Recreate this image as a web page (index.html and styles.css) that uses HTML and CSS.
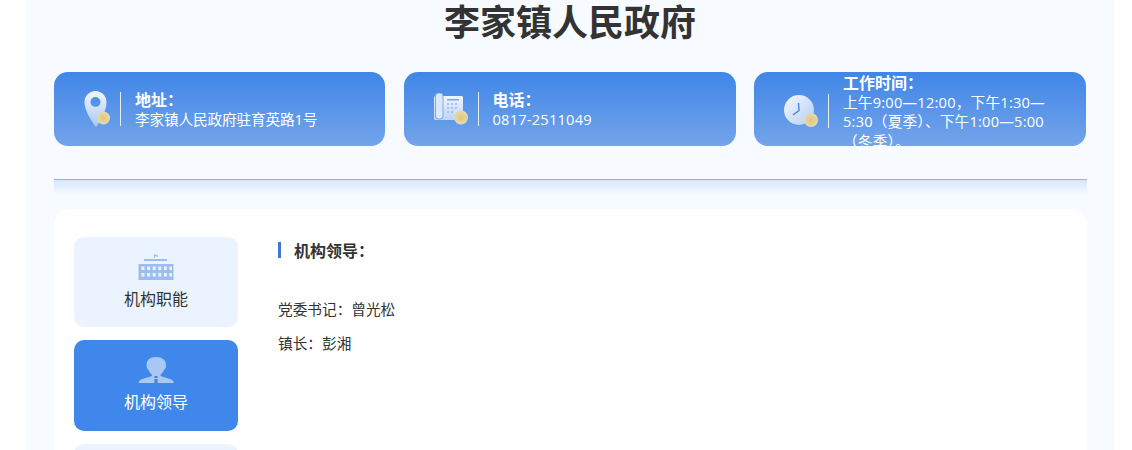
FILE: index.html
```html
<!DOCTYPE html>
<html lang="zh-CN">
<head>
<meta charset="utf-8">
<title>李家镇人民政府</title>
<link rel="stylesheet" href="styles.css">
</head>
<body>
<main class="page">
  <h1 class="title">李家镇人民政府</h1>
  <section class="cards">
    <div class="card">
      <svg class="icon" width="26" height="36" viewBox="0 0 26 36">
        <defs>
          <linearGradient id="pin" x1="0" y1="0" x2="0" y2="1"><stop offset="0" stop-color="#f2f7ff"/><stop offset="1" stop-color="#a9c6f2"/></linearGradient>
          <radialGradient id="gold"><stop offset="0" stop-color="#e6c47a"/><stop offset="1" stop-color="#e0dcb0"/></radialGradient>
        </defs>
        <path fill="url(#pin)" fill-rule="evenodd" d="M11.500 0C5.200 0 .5 5 .5 11c0 8 6 18 11.500 25 3-4 6-9 8-14 1.500-3.500 2.500-7 2.500-11C22.500 5 17.800 0 11.500 0zm0 6a5 5 0 1 1 0 10 5 5 0 0 1 0-10z"/>
        <circle cx="19.500" cy="27" r="6.500" fill="url(#gold)"/>
      </svg>
      <span class="rule"></span>
      <div class="info">
        <strong class="info-head">地址：</strong>
        <p class="info-text info-tight">李家镇人民政府驻育英路1号</p>
      </div>
    </div>
    <div class="card">
      <svg class="icon" width="34" height="32" viewBox="0 0 34 32">
        <defs>
          <linearGradient id="ph" x1="0" y1="0" x2="0" y2="1"><stop offset="0" stop-color="#f0f5ff"/><stop offset="1" stop-color="#bcd4f8"/></linearGradient>
          <radialGradient id="gold2"><stop offset="0" stop-color="#e6c47a"/><stop offset="1" stop-color="#e0dcb0"/></radialGradient>
        </defs>
        <rect x="0" y="3" width="29" height="24" rx="1.500" fill="url(#ph)"/>
        <rect x="1.500" y="0" width="7.500" height="26" rx="3" fill="#dce8fb" stroke="#7fa6e4"/>
        <rect x="13" y="6" width="12" height="1.500" fill="#7fa6e4"/>
        <path d="M13 10h2v2h-2zM17 10h2v2h-2zM21 10h2v2h-2zM13 14h2v2h-2zM17 14h2v2h-2zM21 14h2v2h-2zM13 18h2v2h-2zM17 18h2v2h-2z" fill="#a8c4ee"/>
        <circle cx="27" cy="24.500" r="7" fill="url(#gold2)"/>
      </svg>
      <span class="rule"></span>
      <div class="info">
        <strong class="info-head">电话：</strong>
        <p class="info-text info-wide">0817-2511049</p>
      </div>
    </div>
    <div class="card card-long">
      <svg class="icon" width="34" height="32" viewBox="0 0 34 32">
        <defs>
          <linearGradient id="cl" x1="0" y1="0" x2="1" y2="1"><stop offset="0" stop-color="#f4f8ff"/><stop offset="1" stop-color="#b4cef5"/></linearGradient>
          <radialGradient id="gold3"><stop offset="0" stop-color="#e6c47a"/><stop offset="1" stop-color="#e0dcb0"/></radialGradient>
        </defs>
        <circle cx="15" cy="15" r="15" fill="url(#cl)"/>
        <path d="M14.500 8l.5 7.500L9 20" fill="none" stroke="#4f82d8" stroke-width="1.400"/>
        <circle cx="27" cy="25" r="7" fill="url(#gold3)"/>
      </svg>
      <span class="rule"></span>
      <div class="info">
        <strong class="info-head">工作时间：</strong>
        <p class="info-text info-wide">上午9:00—12:00，下午1:30—5:30（夏季）、下午1:00—5:00（冬季）。</p>
      </div>
    </div>
  </section>
  <div class="band"></div>
  <section class="panel">
    <nav class="side">
      <a class="side-item">
        <svg class="side-icon" width="36" height="27" viewBox="0 0 36 27">
          <path fill="#9dbdee" fill-rule="evenodd" d="M16 0l4 1.500V3l-3-1v2h-1zM6 5h23v2H6zM.5 10h35v16H.5zM3.500 12.500V16h3v-3.500zm5.600 0V16h3v-3.500zm5.600 0V16h3v-3.500zm5.600 0V16h3v-3.500zm5.600 0V16h3v-3.500zm5.600 0V16h2.500v-3.500zM3.500 19v3.500h3V19zm5.600 0v3.500h3V19zm5.600 0v3.500h3V19zm5.600 0v3.500h3V19zm5.600 0v3.500h3V19zm5.600 0v3.500h2.500V19z"/>
        </svg>
        <span>机构职能</span>
      </a>
      <a class="side-item is-active">
        <svg class="side-icon" width="36" height="27" viewBox="0 0 36 27">
          <path fill="#a9c8f4" d="M18 0c6 0 10 3 10 8 0 3-1 4-2 5-.8 2-2.500 4-3.500 5v1l11 3.500c1.500.8 2 2 2.500 3.500H.5c.5-1.500 1-2.700 2.500-3.500L14 19v-1c-1-1-2.700-3-3.500-5-1-1-2-2-2-5 0-5 3.500-8 9.500-8z"/>
          <path fill="#4d7fcf" d="M16.500 19h3v2h-3zM16.500 22h3v4h-3z"/>
        </svg>
        <span>机构领导</span>
      </a>
      <a class="side-item"></a>
    </nav>
    <article class="content">
      <h2 class="content-head">机构领导：</h2>
      <p class="line">党委书记：曾光松</p>
      <p class="line">镇长：彭湘</p>
    </article>
  </section>
</main>
</body>
</html>
```
FILE: styles.css
```css
* { box-sizing: border-box; }
html, body { margin: 0; padding: 0; height: 450px; overflow: hidden; background: #fff; }
body { font-family: "Open Sans", "Noto Sans CJK SC", sans-serif; color: #333; }

.page {
  width: 1088px;
  margin: 0 0 0 26px;
  padding: 0 28px;
  background: #f7fbff;
  height: 450px;
  overflow: hidden;
}
.title {
  margin: 0;
  height: 72px;
  font-size: 36px;
  line-height: 46px;
  font-weight: 700;
  text-align: center;
  color: #333;
}

.cards { display: grid; grid-template-columns: 331px 332px 332px; column-gap: 18.500px; }
.card {
  height: 74px;
  padding-left: 30px;
  border-radius: 14px;
  display: flex;
  align-items: center;
  overflow: hidden;
  color: #fff;
  background: linear-gradient(180deg, #4086e8 0%, #73a4ea 100%);
}
.card-long { padding-top: 4px; }
.icon { flex: none; }
.rule { flex: none; width: 1px; height: 34px; margin: 0 14px 0 10px; background: #e6effc; }
.info { width: 225px; flex: none; padding-top: 2px; }
.info-head { display: block; font-size: 16px; line-height: 20px; font-weight: 700; }
.info-text { margin: 0; font-size: 14.670px; line-height: 19.500px; }
.info-tight { letter-spacing: -0.15px; }
.info-wide { letter-spacing: 0.2px; }

.band {
  width: 1033px;
  height: 16px;
  margin-top: 33px;
  border-top: 1px solid #8db4ea;
  background: linear-gradient(180deg, #d6e6fc 0%, #f7fbff 100%);
}
.panel {
  width: 1033px;
  margin-top: 14px;
  padding: 28px 20px;
  height: 400px;
  background: #fff;
  border-radius: 16px;
  display: flex;
  gap: 40px;
}
.side { width: 164px; flex: none; display: flex; flex-direction: column; gap: 13px; }
.side-item {
  height: 90px;
  flex: none;
  border-radius: 10px;
  background: #ebf4fe;
  display: flex;
  flex-direction: column;
  align-items: center;
  padding-top: 17px;
  font-size: 16px;
  line-height: 24px;
  color: #333;
}
.side-icon { margin-bottom: 6px; }
.is-active { height: 91px; background: #3f87ea; color: #fff; }

.content { flex: 1; }
.content-head {
  margin: 5px 0 0;
  padding-left: 13px;
  height: 16px;
  border-left: 3px solid #3f78d0;
  font-size: 16px;
  line-height: 18px;
  font-weight: 700;
  color: #333;
}
.line { margin: 0; font-size: 14.670px; line-height: 33.500px; color: #333; }
.content-head + .line { margin-top: 35px; }
```
